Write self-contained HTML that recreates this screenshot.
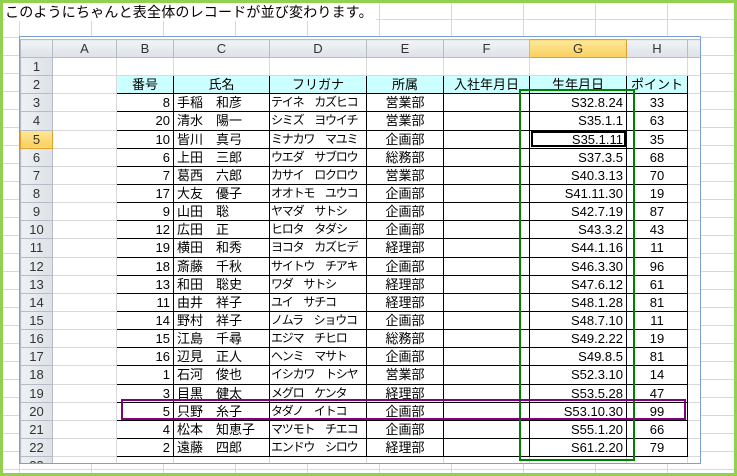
<!DOCTYPE html>
<html><head><meta charset="utf-8"><style>
*{margin:0;padding:0;box-sizing:border-box}
body{width:737px;height:476px;overflow:hidden;background:#fff;font-family:"Liberation Sans","Noto Sans CJK JP",sans-serif;position:relative}
.frame{position:absolute;left:0;top:0;width:737px;height:476px;border:3px solid #92d050;z-index:10;pointer-events:none}
.bg{position:absolute;left:0;top:0;width:737px;height:476px;
background-image:linear-gradient(90deg,#d8d8d8 1px,transparent 1px),linear-gradient(#d8d8d8 1px,transparent 1px);
background-size:72px 18px;background-position:19px 1px}
.title{position:absolute;left:5px;top:4px;font-size:14px;line-height:17px;background:#fff;padding-right:3px;letter-spacing:0.2px}
.win{position:absolute;left:19px;top:36px;width:682px;height:428px;border:1px solid #7a9fd0;background:#fff;overflow:hidden}
table{position:absolute;left:0;top:2px;width:681px;border-collapse:collapse;table-layout:fixed;font-size:13px}
td{border:1px solid #d9d9d9;height:18.15px;line-height:15px;padding:0 3px;white-space:nowrap;overflow:hidden}
tr.h td{background:linear-gradient(#f1f3f6,#dde2e8);border-color:#b5bcc6;text-align:center;color:#333;height:18px}
td.rh{background:linear-gradient(90deg,#eef1f4,#dde2e8);border-color:#b5bcc6;text-align:center;color:#333}
tr.h td.sel{background:linear-gradient(#fde89a,#f9cf5e);border-color:#e0a030}
td.rh.sel{background:linear-gradient(#fde89a,#f9cf5e);border-color:#e0a030}
td.b{border:1px solid #000}
td.hd{background:#ccffff;text-align:center}
td.r{text-align:right}
td.c{text-align:center}
td.k{font-size:12px;letter-spacing:-1.2px;padding:0 1px}
td.cur{outline:2px solid #000;outline-offset:-3px}
.green{position:absolute;left:519px;top:89px;width:116px;height:372px;border:2px solid #008000;z-index:5}
.purple{position:absolute;left:121px;top:399px;width:565px;height:21px;border:2px solid #800080;z-index:5}
</style></head><body>
<div class="bg"></div>
<div class="title">このようにちゃんと表全体のレコードが並び変わります。</div>
<div class="win">
<table>
<colgroup><col style="width:32px"><col style="width:64px"><col style="width:57px"><col style="width:96px"><col style="width:97px"><col style="width:77px"><col style="width:86px"><col style="width:97px"><col style="width:61px"><col style="width:14px"></colgroup>
<tr class="h"><td></td><td>A</td><td>B</td><td>C</td><td>D</td><td>E</td><td>F</td><td class="sel">G</td><td>H</td><td></td></tr>
<tr><td class="rh">1</td><td></td><td></td><td></td><td></td><td></td><td></td><td></td><td></td><td></td></tr>
<tr><td class="rh">2</td><td></td><td class="b hd">番号</td><td class="b hd">氏名</td><td class="b hd">フリガナ</td><td class="b hd">所属</td><td class="b hd">入社年月日</td><td class="b hd">生年月日</td><td class="b hd">ポイント</td><td></td></tr>
<tr><td class="rh">3</td><td></td><td class="b r">8</td><td class="b">手稲　和彦</td><td class="b k">テイネ　カズヒコ</td><td class="b c">営業部</td><td class="b"></td><td class="b r">S32.8.24</td><td class="b c">33</td><td></td></tr>
<tr><td class="rh">4</td><td></td><td class="b r">20</td><td class="b">清水　陽一</td><td class="b k">シミズ　ヨウイチ</td><td class="b c">営業部</td><td class="b"></td><td class="b r">S35.1.1</td><td class="b c">63</td><td></td></tr>
<tr><td class="rh sel">5</td><td></td><td class="b r">10</td><td class="b">皆川　真弓</td><td class="b k">ミナカワ　マユミ</td><td class="b c">企画部</td><td class="b"></td><td class="b r cur">S35.1.11</td><td class="b c">35</td><td></td></tr>
<tr><td class="rh">6</td><td></td><td class="b r">6</td><td class="b">上田　三郎</td><td class="b k">ウエダ　サブロウ</td><td class="b c">総務部</td><td class="b"></td><td class="b r">S37.3.5</td><td class="b c">68</td><td></td></tr>
<tr><td class="rh">7</td><td></td><td class="b r">7</td><td class="b">葛西　六郎</td><td class="b k">カサイ　ロクロウ</td><td class="b c">営業部</td><td class="b"></td><td class="b r">S40.3.13</td><td class="b c">70</td><td></td></tr>
<tr><td class="rh">8</td><td></td><td class="b r">17</td><td class="b">大友　優子</td><td class="b k">オオトモ　ユウコ</td><td class="b c">企画部</td><td class="b"></td><td class="b r">S41.11.30</td><td class="b c">19</td><td></td></tr>
<tr><td class="rh">9</td><td></td><td class="b r">9</td><td class="b">山田　聡</td><td class="b k">ヤマダ　サトシ</td><td class="b c">企画部</td><td class="b"></td><td class="b r">S42.7.19</td><td class="b c">87</td><td></td></tr>
<tr><td class="rh">10</td><td></td><td class="b r">12</td><td class="b">広田　正</td><td class="b k">ヒロタ　タダシ</td><td class="b c">企画部</td><td class="b"></td><td class="b r">S43.3.2</td><td class="b c">43</td><td></td></tr>
<tr><td class="rh">11</td><td></td><td class="b r">19</td><td class="b">横田　和秀</td><td class="b k">ヨコタ　カズヒデ</td><td class="b c">経理部</td><td class="b"></td><td class="b r">S44.1.16</td><td class="b c">11</td><td></td></tr>
<tr><td class="rh">12</td><td></td><td class="b r">18</td><td class="b">斎藤　千秋</td><td class="b k">サイトウ　チアキ</td><td class="b c">企画部</td><td class="b"></td><td class="b r">S46.3.30</td><td class="b c">96</td><td></td></tr>
<tr><td class="rh">13</td><td></td><td class="b r">13</td><td class="b">和田　聡史</td><td class="b k">ワダ　サトシ</td><td class="b c">経理部</td><td class="b"></td><td class="b r">S47.6.12</td><td class="b c">61</td><td></td></tr>
<tr><td class="rh">14</td><td></td><td class="b r">11</td><td class="b">由井　祥子</td><td class="b k">ユイ　サチコ</td><td class="b c">経理部</td><td class="b"></td><td class="b r">S48.1.28</td><td class="b c">81</td><td></td></tr>
<tr><td class="rh">15</td><td></td><td class="b r">14</td><td class="b">野村　祥子</td><td class="b k">ノムラ　ショウコ</td><td class="b c">企画部</td><td class="b"></td><td class="b r">S48.7.10</td><td class="b c">11</td><td></td></tr>
<tr><td class="rh">16</td><td></td><td class="b r">15</td><td class="b">江島　千尋</td><td class="b k">エジマ　チヒロ</td><td class="b c">総務部</td><td class="b"></td><td class="b r">S49.2.22</td><td class="b c">19</td><td></td></tr>
<tr><td class="rh">17</td><td></td><td class="b r">16</td><td class="b">辺見　正人</td><td class="b k">ヘンミ　マサト</td><td class="b c">企画部</td><td class="b"></td><td class="b r">S49.8.5</td><td class="b c">81</td><td></td></tr>
<tr><td class="rh">18</td><td></td><td class="b r">1</td><td class="b">石河　俊也</td><td class="b k">イシカワ　トシヤ</td><td class="b c">営業部</td><td class="b"></td><td class="b r">S52.3.10</td><td class="b c">14</td><td></td></tr>
<tr><td class="rh">19</td><td></td><td class="b r">3</td><td class="b">目黒　健太</td><td class="b k">メグロ　ケンタ</td><td class="b c">経理部</td><td class="b"></td><td class="b r">S53.5.28</td><td class="b c">47</td><td></td></tr>
<tr><td class="rh">20</td><td></td><td class="b r">5</td><td class="b">只野　糸子</td><td class="b k">タダノ　イトコ</td><td class="b c">企画部</td><td class="b"></td><td class="b r">S53.10.30</td><td class="b c">99</td><td></td></tr>
<tr><td class="rh">21</td><td></td><td class="b r">4</td><td class="b">松本　知恵子</td><td class="b k">マツモト　チエコ</td><td class="b c">企画部</td><td class="b"></td><td class="b r">S55.1.20</td><td class="b c">66</td><td></td></tr>
<tr><td class="rh">22</td><td></td><td class="b r">2</td><td class="b">遠藤　四郎</td><td class="b k">エンドウ　シロウ</td><td class="b c">経理部</td><td class="b"></td><td class="b r">S61.2.20</td><td class="b c">79</td><td></td></tr>
<tr><td class="rh">23</td><td></td><td></td><td></td><td></td><td></td><td></td><td></td><td></td><td></td></tr>
</table>
</div>
<div class="green"></div>
<div class="purple"></div>
<div class="frame"></div>
</body></html>
